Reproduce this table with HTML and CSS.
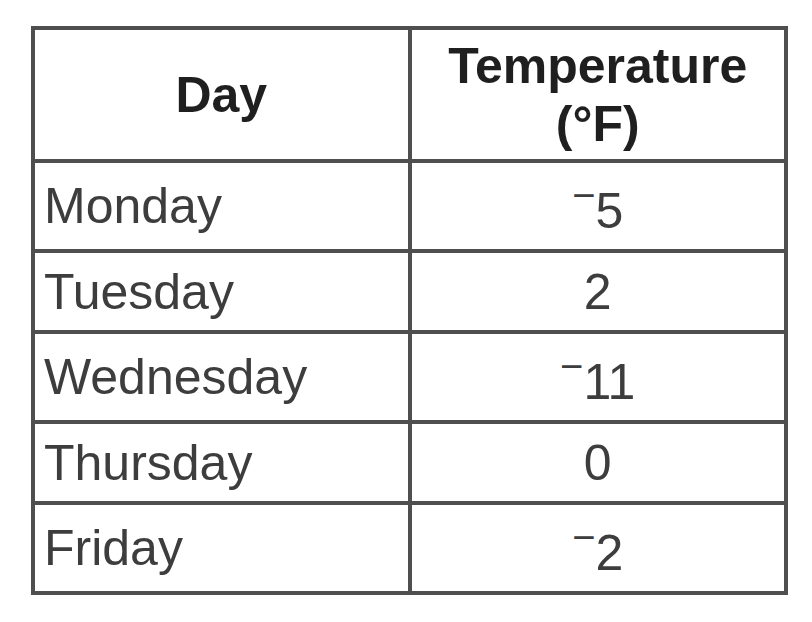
FILE: index.html
```html
<!DOCTYPE html>
<html lang="en">
  <head>
    <meta charset="UTF-8" />
    <meta name="viewport" content="width=device-width, initial-scale=1.0" />
    <title>Temperatures</title>
    <link rel="stylesheet" href="styles.css">
  </head>
  <body>
    <table class="temps">
      <thead>
        <tr>
          <th>Day</th>
          <th>Temperature<br />(°F)</th>
        </tr>
      </thead>
      <tbody>
        <tr>
          <td class="day">Monday</td>
          <td class="val"><sup>−</sup>5</td>
        </tr>
        <tr>
          <td class="day">Tuesday</td>
          <td class="val">2</td>
        </tr>
        <tr>
          <td class="day">Wednesday</td>
          <td class="val"><sup>−</sup>11</td>
        </tr>
        <tr>
          <td class="day">Thursday</td>
          <td class="val">0</td>
        </tr>
        <tr>
          <td class="day">Friday</td>
          <td class="val"><sup>−</sup>2</td>
        </tr>
      </tbody>
    </table>
  </body>
</html>
```

FILE: styles.css
```css
body {
  margin: 0;
  padding: 26px 0 0 31px;
  background: #fff;
  font-family: "Liberation Sans", Arial, sans-serif;
}
.temps {
  border-collapse: collapse;
  width: 757px;
  table-layout: fixed;
  font-size: 50px;
  color: #3d3d3d;
}
.temps th,
.temps td {
  border: 4px solid #4f4f4f;
}
.temps th {
  width: 50%;
  padding: 6.5px 6px;
  font-weight: bold;
  color: #1f1f1f;
  text-align: center;
}
.temps td {
  padding: 9.5px 9px;
}
.temps .val {
  text-align: center;
}
.temps sup {
  font-size: 0.8em;
  vertical-align: 19px;
}
```
